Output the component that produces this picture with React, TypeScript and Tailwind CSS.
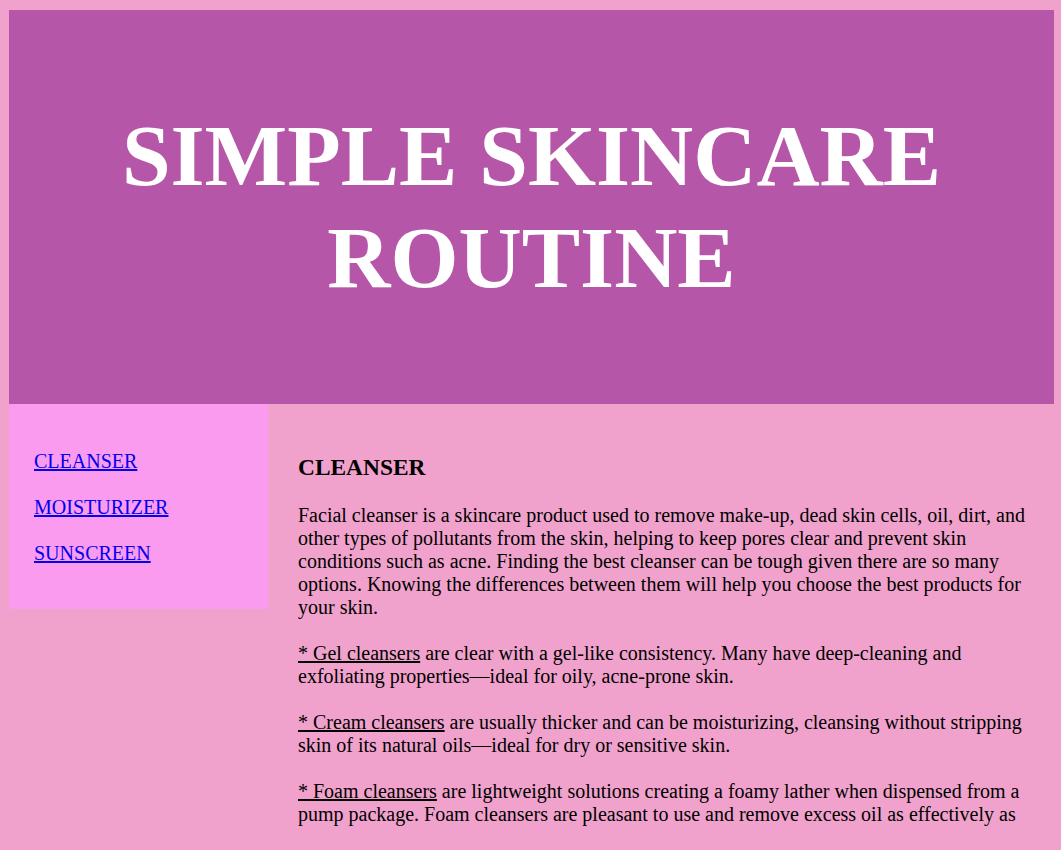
export default function App() {
  return (
    <div
      className="min-h-[850px] bg-[#f0a2cc] pt-[10px] pl-[9px] pr-[7px] text-black"
      style={{ fontFamily: '"Liberation Serif", "Times New Roman", serif' }}
    >
      <header className="h-[394px] bg-[#b556a8] flex items-center justify-center">
        <h1 className="text-white font-bold text-[87.5px] leading-[102px] text-center">
          SIMPLE SKINCARE
          <br />
          ROUTINE
        </h1>
      </header>

      <div className="flex items-start">
        <nav className="w-[259px] shrink-0 bg-[#fa9bf0] px-[25px] pt-[46px] pb-[44px] flex flex-col gap-[23px] text-[20px] leading-[23px]">
          <a href="#cleanser" className="text-[#0000ee] underline w-fit">
            CLEANSER
          </a>
          <a href="#moisturizer" className="text-[#0000ee] underline w-fit">
            MOISTURIZER
          </a>
          <a href="#sunscreen" className="text-[#0000ee] underline w-fit">
            SUNSCREEN
          </a>
        </nav>

        <main className="flex-1 h-[422px] overflow-hidden pl-[30px] pr-[20px] pt-[50px] text-[20px] leading-[23px]">
          <h3 className="font-bold text-[23.4px] leading-[27px]">CLEANSER</h3>
          <p className="mt-[23px]">
            Facial cleanser is a skincare product used to remove make-up, dead skin cells, oil,
            dirt, and other types of pollutants from the skin, helping to keep pores clear and
            prevent skin conditions such as acne. Finding the best cleanser can be tough given
            there are so many options. Knowing the differences between them will help you choose
            the best products for your skin.
          </p>
          <p className="mt-[23px]">
            <span className="underline">* Gel cleansers</span> are clear with a gel-like
            consistency. Many have deep-cleaning and exfoliating properties—ideal for oily,
            acne-prone skin.
          </p>
          <p className="mt-[23px]">
            <span className="underline">* Cream cleansers</span> are usually thicker and can be
            moisturizing, cleansing without stripping skin of its natural oils—ideal for dry or
            sensitive skin.
          </p>
          <p className="mt-[23px]">
            <span className="underline">* Foam cleansers</span> are lightweight solutions creating
            a foamy lather when dispensed from a pump package. Foam cleansers are pleasant to use
            and remove excess oil as effectively as gel cleansers—ideal for combination skin.
          </p>
        </main>
      </div>
    </div>
  );
}
